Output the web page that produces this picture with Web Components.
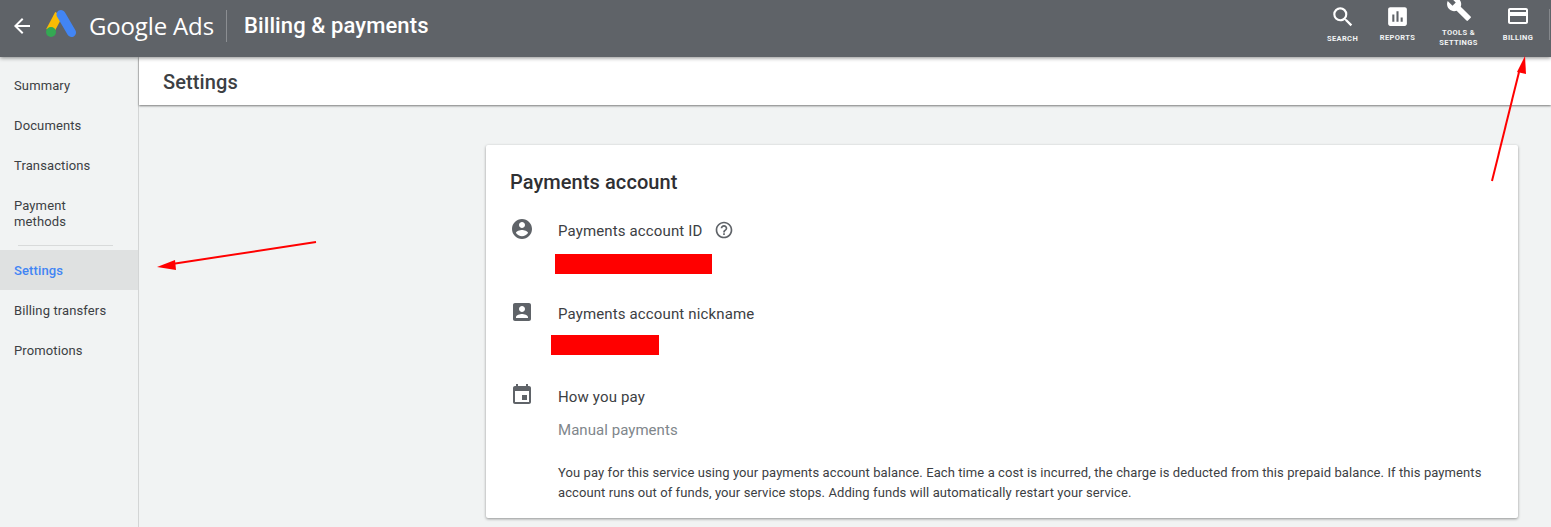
<!DOCTYPE html>
<html><head><meta charset="utf-8"><title>Billing</title>
<style>
html,body{margin:0;padding:0;height:527px;overflow:hidden;background:#f1f3f3;font-family:Roboto,"Liberation Sans",sans-serif;color:#3c4043}
</style></head><body>
<ads-app></ads-app>
<template id="t-app">
<style>
:host{display:flex;flex-direction:column;height:527px;position:relative;overflow:hidden}
.body{display:flex;flex:1;min-height:0}
main{flex:1;min-width:0;display:flex;flex-direction:column}
.wrap{flex:1;padding:40px 33px 0 347px;min-height:0}
svg.ann{position:absolute;left:0;top:0;pointer-events:none;z-index:5}
</style>
<ads-header></ads-header>
<div class="body">
<ads-nav></ads-nav>
<main>
<ads-title>Settings</ads-title>
<div class="wrap"><ads-card></ads-card></div>
</main>
</div>
<svg class="ann" width="1551" height="527" viewBox="0 0 1551 527">
<path d="M316 242L172 264" stroke="#f00" stroke-width="2" fill="none"/>
<path d="M157 267L175 260L176 270Z" fill="#f00"/>
<path d="M1492 181L1519 72" stroke="#f00" stroke-width="2" fill="none"/>
<path d="M1525 56L1517 72L1526 74Z" fill="#f00"/>
</svg>
</template>

<template id="t-header">
<style>
:host{display:flex;align-items:center;height:57px;box-sizing:border-box;padding-bottom:5px;background:#5f6368;color:#fff;box-shadow:0 1px 4px rgba(0,0,0,.45);position:relative;z-index:2;flex:none}
.back{margin-left:10px;width:24px;height:24px;display:block;flex:none}
.logo{margin-left:11px;width:32px;height:29px;display:block;flex:none;margin-bottom:5px}
.brand{margin-left:12px;margin-top:-1px;font:400 24px/32px "Open Sans",Roboto,sans-serif;letter-spacing:-.15px;white-space:nowrap;width:125px}
.sep{width:1px;height:32px;background:#8b8e92;margin-left:12px;flex:none;margin-bottom:0}
.page{margin-left:17px;font:500 22px/30px Roboto,sans-serif;white-space:nowrap;letter-spacing:.1px}
.sp{flex:1}
.acts{display:flex;align-items:flex-start;height:57px;align-self:flex-start}
.edge{width:1px;height:31px;background:#85888c;margin:9px 1px 0 5px;flex:none}
</style>
<svg class="back" viewBox="0 0 24 24"><path fill="#fff" d="M20 11H7.830l5.590-5.590L12 4l-8 8 8 8 1.410-1.410L7.830 13H20z"/></svg>
<svg class="logo" viewBox="0 0 32 29">
<path d="M14 5L5 22" stroke="#fbbc04" stroke-width="8.500" stroke-linecap="butt"/>
<path d="M16 5.500L26.500 23.500" stroke="#4285f4" stroke-width="9" stroke-linecap="round"/>
<circle cx="6" cy="23" r="5" fill="#34a853"/>
</svg>
<div class="brand">Google Ads</div><div class="sep"></div>
<div class="page">Billing &amp; payments</div><div class="sp"></div>
<div class="acts">
<ads-action style="width:55px" top="4" label-top="5">
<svg viewBox="0 0 24 24" width="26" height="26"><path fill="#fff" d="M15.500 14h-.79l-.28-.27A6.470 6.470 0 0 0 16 9.500 6.500 6.500 0 1 0 9.500 16c1.610 0 3.090-.59 4.230-1.570l.27.28v.79l5 4.990L20.490 19l-4.990-5zm-6 0C7.010 14 5 11.990 5 9.500S7.010 5 9.500 5 14 7.010 14 9.500 11.990 14 9.500 14z"/></svg>
<span slot="l">SEARCH</span></ads-action>
<ads-action style="width:55px" top="4" label-top="4">
<svg viewBox="0 0 24 24" width="25" height="25"><path fill="#fff" d="M19 3H5c-1.100 0-2 .9-2 2v14c0 1.100.9 2 2 2h14c1.100 0 2-.9 2-2V5c0-1.100-.9-2-2-2zM9 17H7v-7h2v7zm4 0h-2V7h2v10zm4 0h-2v-4h2v4z"/></svg>
<span slot="l">REPORTS</span></ads-action>
<ads-action style="width:67px" top="-4" label-top="7">
<svg viewBox="0 0 24 24" width="26" height="26"><path fill="#fff" d="M22.700 19l-9.100-9.100c.9-2.300.4-5-1.500-6.900-2-2-5-2.400-7.400-1.300L9 6 6 9 1.600 4.700C.4 7.100.9 10.100 2.900 12.100c1.900 1.900 4.600 2.400 6.900 1.500l9.100 9.100c.4.4 1 .4 1.400 0l2.300-2.300c.5-.4.5-1.100.1-1.400z"/></svg>
<span slot="l">TOOLS &amp;<br>SETTINGS</span></ads-action>
<ads-action style="width:52px" top="4" label-top="4">
<svg viewBox="0 0 24 24" width="24" height="24"><path fill="#fff" d="M20 4H4c-1.110 0-1.990.89-1.990 2L2 18c0 1.110.89 2 2 2h16c1.110 0 2-.89 2-2V6c0-1.110-.89-2-2-2zm0 14H4v-6h16v6zm0-10H4V6h16v2z"/></svg>
<span slot="l">BILLING</span></ads-action>
<div class="edge"></div>
</div>
</template>

<template id="t-action">
<style>
:host{display:flex;flex-direction:column;align-items:center;color:#fff}
.i{height:25px;display:flex;justify-content:center;align-items:flex-start}
.i ::slotted(svg){display:block;flex:none}
.l{font:700 7.500px/10px Roboto,sans-serif;letter-spacing:.38px;text-align:center;white-space:nowrap;color:#f1f3f4}
</style>
<div class="i"><slot></slot></div><div class="l"><slot name="l"></slot></div>
</template>

<template id="t-nav">
<style>
:host{display:block;width:138px;border-right:1px solid #d3d5d5;background:#f1f3f3;padding-top:8px;flex:none;font:400 13px/16px Roboto,sans-serif;letter-spacing:.12px;color:#3c4043}
.sep{height:1px;background:#d8dada;margin:4px 25px 4px 18px}
</style>
<ads-nav-item>Summary</ads-nav-item>
<ads-nav-item>Documents</ads-nav-item>
<ads-nav-item>Transactions</ads-nav-item>
<ads-nav-item>Payment<br>methods</ads-nav-item>
<div class="sep"></div>
<ads-nav-item active>Settings</ads-nav-item>
<ads-nav-item>Billing transfers</ads-nav-item>
<ads-nav-item>Promotions</ads-nav-item>
</template>

<template id="t-nav-item">
<style>
:host{display:block;padding:13px 14px 11px}
:host([active]){background:#dfe1e1;color:#4285f4;font-weight:500}
</style><slot></slot>
</template>

<template id="t-title">
<style>
:host{display:flex;align-items:center;height:48px;box-sizing:border-box;padding-top:2px;background:#fff;padding-left:24px;font:500 20px/28px Roboto,sans-serif;letter-spacing:.1px;color:#3c4043;box-shadow:0 1px 2px rgba(0,0,0,.5);flex:none;position:relative;z-index:1}
</style><slot></slot>
</template>

<template id="t-card">
<style>
:host{display:block;height:373px;box-sizing:border-box;background:#fff;border-radius:2px;box-shadow:0 1px 3px rgba(0,0,0,.4);padding:23px 24px 0;color:#3c4043}
h2{margin:0;font:500 20px/28px Roboto,sans-serif;color:#2f3033;letter-spacing:.08px}
.row{display:flex}
svg{display:block;flex:none}
.ic{width:48px;flex:none}
.c{flex:1;min-width:0}
.t{font:400 15px/20px Roboto,sans-serif;letter-spacing:.14px;display:flex;align-items:center;color:#3c4043}
.red{background:#f00;height:20px}
.m{font:400 15px/20px Roboto,sans-serif;color:#80868b;margin-top:13px;letter-spacing:.05px}
.p{font:400 13px/20px Roboto,sans-serif;margin-top:23px;color:#3c4043;letter-spacing:.09px;white-space:nowrap}
</style>
<h2>Payments account</h2>
<div class="row" style="margin-top:21px">
<div class="ic"><svg viewBox="0 0 24 24" width="24" height="24"><path fill="#5f6368" d="M12 2C6.480 2 2 6.480 2 12s4.480 10 10 10 10-4.480 10-10S17.520 2 12 2zm0 3c1.660 0 3 1.340 3 3s-1.340 3-3 3-3-1.340-3-3 1.340-3 3-3zm0 14.200c-2.500 0-4.710-1.280-6-3.220.03-1.990 4-3.080 6-3.080 1.990 0 5.970 1.090 6 3.080-1.290 1.940-3.500 3.220-6 3.220z"/></svg></div>
<div class="c"><div class="t" style="margin-top:4px">Payments account ID<svg viewBox="0 0 24 24" width="20" height="20" style="margin-top:-3px;margin-left:12px"><path fill="#5f6368" d="M11 18h2v-2h-2v2zm1-16C6.480 2 2 6.480 2 12s4.480 10 10 10 10-4.480 10-10S17.520 2 12 2zm0 18c-4.410 0-8-3.590-8-8s3.590-8 8-8 8 3.590 8 8-3.590 8-8 8zm0-14c-2.210 0-4 1.790-4 4h2c0-1.100.9-2 2-2s2 .9 2 2c0 2-3 1.750-3 5h2c0-2.250 3-2.500 3-5 0-2.210-1.790-4-4-4z"/></svg></div>
<div class="red" style="width:157px;margin:13px 0 0 -3px"></div></div>
</div>
<div class="row" style="margin-top:26px">
<div class="ic"><svg viewBox="0 0 24 24" width="24" height="24"><path fill="#5f6368" d="M3 5v14c0 1.100.89 2 2 2h14c1.100 0 2-.9 2-2V5c0-1.100-.9-2-2-2H5c-1.110 0-2 .9-2 2zm12 4c0 1.660-1.340 3-3 3s-3-1.340-3-3 1.340-3 3-3 3 1.340 3 3zm-9 8c0-2 4-3.100 6-3.100s6 1.100 6 3.100v1H6v-1z"/></svg></div>
<div class="c"><div class="t" style="margin-top:4px">Payments account nickname</div>
<div class="red" style="width:108px;margin:11px 0 0 -7px"></div></div>
</div>
<div class="row" style="margin-top:28px">
<div class="ic"><svg viewBox="0 0 24 24" width="24" height="24"><path fill="#5f6368" d="M17 12h-5v5h5v-5zM16 1v2H8V1H6v2H5c-1.110 0-1.990.9-1.990 2L3 19c0 1.100.89 2 2 2h14c1.100 0 2-.9 2-2V5c0-1.100-.9-2-2-2h-1V1h-2zm3 18H5V8h14v11z" /></svg></div>
<div class="c"><div class="t" style="margin-top:4px">How you pay</div>
<div class="m">Manual payments</div>
<div class="p">You pay for this service using your payments account balance. Each time a cost is incurred, the charge is deducted from this prepaid balance. If this payments<br>account runs out of funds, your service stops. Adding funds will automatically restart your service.</div></div>
</div>
</template>

<script>
function def(name,tpl,extra){
  customElements.define(name,class extends HTMLElement{
    constructor(){super();this.attachShadow({mode:'open'}).appendChild(document.getElementById(tpl).content.cloneNode(true));}
    connectedCallback(){if(extra)extra(this);}
  });
}
def('ads-action','t-action',function(el){
  var i=el.shadowRoot.querySelector('.i'),l=el.shadowRoot.querySelector('.l');
  i.style.marginTop=(el.getAttribute('top')||0)+'px';
  l.style.marginTop=(el.getAttribute('label-top')||0)+'px';
});
def('ads-nav-item','t-nav-item');
def('ads-nav','t-nav');
def('ads-title','t-title');
def('ads-card','t-card');
def('ads-header','t-header');
def('ads-app','t-app');
</script>
</body></html>
